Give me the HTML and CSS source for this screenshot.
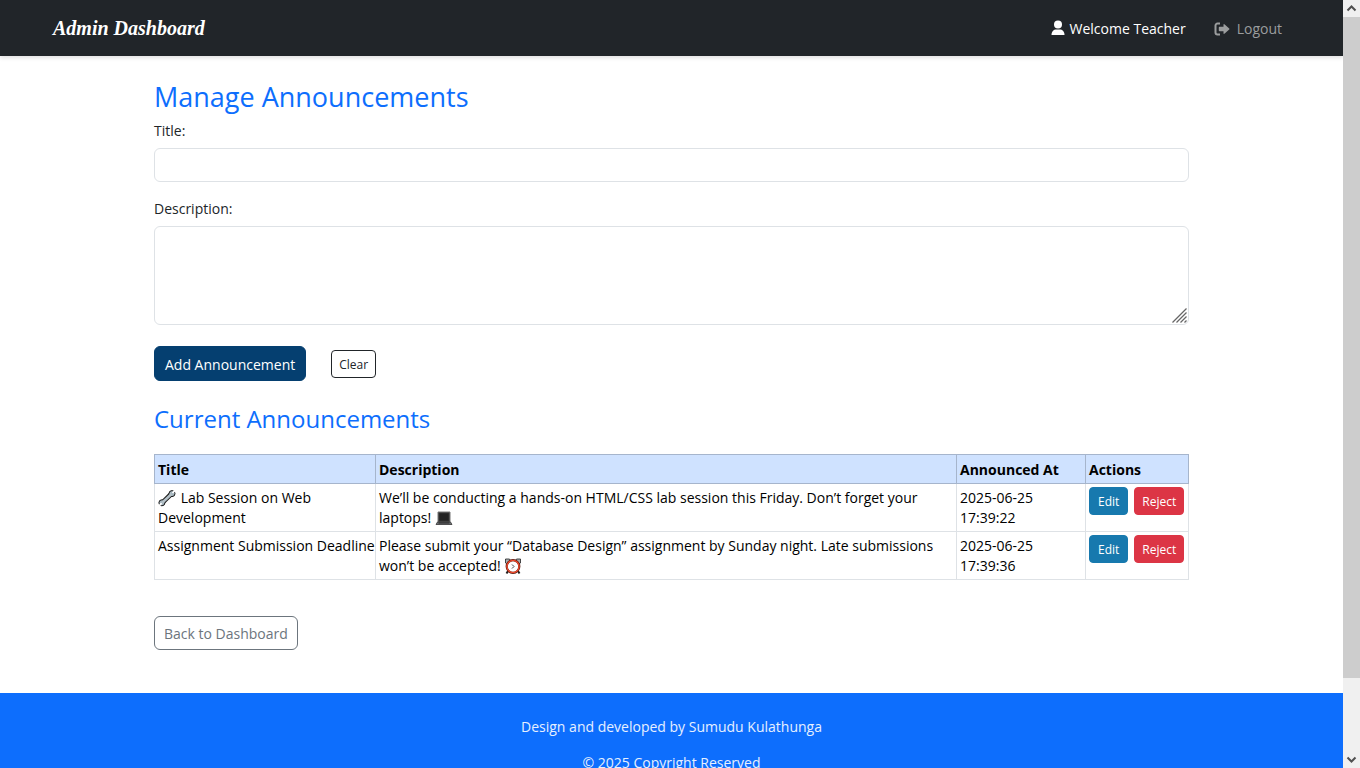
FILE: index.html
```html
<!DOCTYPE html>
<html lang="en">
<head>
<meta charset="utf-8">
<meta name="viewport" content="width=device-width, initial-scale=1">
<title>Admin Dashboard</title>
<link rel="stylesheet" href="styles.css">
</head>
<body>
<div class="page">
  <header class="navbar">
    <a class="brand" href="#">Admin Dashboard</a>
    <nav class="nav-links">
      <span class="welcome">
        <svg class="icon-user" viewBox="0 0 14 16" aria-hidden="true"><circle cx="7" cy="4.500" r="4"/><path d="M.5 15c0-3.500 2-5.500 5-5.500h3c3 0 5 2 5 5.500z"/></svg>
        Welcome Teacher
      </span>
      <a class="logout" href="#">
        <svg class="icon-logout" viewBox="0 0 16 14" aria-hidden="true"><path d="M6 1.500H3.500a2 2 0 0 0-2 2v7a2 2 0 0 0 2 2H6" fill="none" stroke="currentColor" stroke-width="2"/><path d="M5.500 4.800h4V3q0-1.600 1.200-.5l4.500 4q.6.500 0 1l-4.500 4q-1.200 1-1.200-.5V9.200h-4q-.7 0-.7-.7v-3q0-.7.700-.7z"/></svg>
        Logout
      </a>
    </nav>
  </header>

  <main class="content">
    <h1 class="title">Manage Announcements</h1>
    <form class="form">
      <label class="label" for="title">Title:</label>
      <input class="field" id="title" type="text">
      <label class="label" for="description">Description:</label>
      <div class="area-wrap">
        <textarea class="field area" id="description"></textarea>
        <svg class="grip" viewBox="0 0 15 15" aria-hidden="true"><path d="M.5 14.500 14.500.5M4.500 14.500l10-10M8.500 14.500l6-6M12.500 14.500l2-2"/></svg>
      </div>
      <div class="form-actions">
        <button class="btn btn-add" type="submit">Add Announcement</button>
        <button class="btn btn-small btn-clear" type="reset">Clear</button>
      </div>
    </form>

    <h2 class="subtitle">Current Announcements</h2>
    <table class="table">
      <colgroup><col class="col-title"><col class="col-desc"><col class="col-date"><col class="col-actions"></colgroup>
      <thead>
        <tr><th scope="col">Title</th><th scope="col">Description</th><th scope="col">Announced At</th><th scope="col">Actions</th></tr>
      </thead>
      <tbody>
        <tr>
          <td><svg class="emoji emoji-wrench" viewBox="0 0 18 18" role="img" aria-label="wrench"><path d="M4.200 13.800 13.200 5" stroke="#1b1b1b" stroke-width="4.600"/><circle cx="3.900" cy="13.800" r="3" fill="#a3b4bd" stroke="#1b1b1b"/><circle cx="14" cy="4.600" r="3" fill="#a3b4bd" stroke="#1b1b1b"/><path d="M4.200 13.800 13.500 5" stroke="#b4c1c8" stroke-width="2.600"/><path d="m1 17 2.600-2.800M14.500 4 17 1.300" stroke="#fff" stroke-width="1.800"/></svg> Lab Session on Web<br>Development</td>
          <td>We’ll be conducting a hands-on HTML/CSS lab session this Friday. Don’t forget your laptops! <svg class="emoji" viewBox="0 0 18 18" role="img" aria-label="laptop"><path d="M3 3h12v10H3z" fill="#333" stroke="#777" stroke-width="1"/><path d="M4.500 4.500h9v7h-9z" fill="#222"/><path d="M2.500 13h13l1.500 2.500H1z" fill="#75777a" stroke="#222" stroke-width=".7"/><path d="M3.500 14h11" stroke="#222"/></svg></td>
          <td>2025-06-25 17:39:22</td>
          <td><div class="row-actions"><button class="btn btn-small btn-edit" type="button">Edit</button><button class="btn btn-small btn-reject" type="button">Reject</button></div></td>
        </tr>
        <tr>
          <td>Assignment Submission Deadline</td>
          <td>Please submit your “Database Design” assignment by Sunday night. Late submissions won’t be accepted! <svg class="emoji" viewBox="0 0 18 18" role="img" aria-label="alarm clock"><path d="m4 14-1.500 2.500M14 14l1.500 2.500" stroke="#222" stroke-width="2"/><path d="M1.500 6V2h4l1 2-3.500 3zM16.500 6V2h-4l-1 2L15 7z" fill="#a9b1b5" stroke="#222" stroke-width=".8"/><circle cx="9" cy="9.500" r="6.300" fill="#fff" stroke="#5a1a10" stroke-width="2.200"/><circle cx="9" cy="9.500" r="6.100" fill="none" stroke="#ee4a2c" stroke-width="1.400"/><path d="m8 7.500 2 2-2 2" fill="none" stroke="#444"/></svg></td>
          <td>2025-06-25 17:39:36</td>
          <td><div class="row-actions"><button class="btn btn-small btn-edit" type="button">Edit</button><button class="btn btn-small btn-reject" type="button">Reject</button></div></td>
        </tr>
      </tbody>
    </table>
    <a class="btn btn-back" href="#">Back to Dashboard</a>
  </main>

  <footer class="footer">
    <p>Design and developed by Sumudu Kulathunga</p>
    <p>© 2025 Copyright Reserved</p>
  </footer>
</div>
<div class="scrollbar" aria-hidden="true">
  <svg class="arrow" viewBox="0 0 17 17"><path d="m4.500 10.500 4-4 4 4"/></svg>
  <div class="track"><div class="thumb"></div></div>
  <svg class="arrow" viewBox="0 0 17 17"><path d="m4.500 6.500 4 4 4-4"/></svg>
</div>
</body>
</html>
```
FILE: styles.css
```css
*, *::before, *::after { box-sizing: border-box; }
body {
  display: flex;
  height: 100vh;
  margin: 0;
  overflow: hidden;
  background: #fff;
  color: #212529;
  font-family: "Open Sans", "Noto Sans", sans-serif;
  font-size: 14px;
  line-height: 20px;
}
.page { flex: 1; min-width: 0; overflow: hidden; }
.navbar {
  display: flex;
  align-items: center;
  justify-content: space-between;
  height: 56px;
  padding: 0 61px 0 53px;
  background: #212529;
  box-shadow: 0 2px 4px rgba(0, 0, 0, .12);
}
.brand {
  color: #fff;
  font: italic bold 20px/28px "Liberation Serif", serif;
  text-decoration: none;
}
.nav-links { display: flex; gap: 28px; padding-top: 2px; }
.welcome, .logout { display: flex; align-items: center; gap: 7px; color: #fff; }
.welcome { gap: 5px; }
.logout { color: #9b9d9e; text-decoration: none; }
.icon-user { width: 14px; height: 16px; margin-bottom: 2px; fill: currentColor; }
.icon-logout { width: 16px; height: 14px; fill: currentColor; }

.content { max-width: 1035px; margin: 0 auto; padding: 24px 0 43px; }
.title, .subtitle { margin: 0; color: #0d6efd; font-weight: 400; }
.title { font-size: 27px; line-height: 34px; }
.subtitle { margin: 21px 0 18px; font-size: 24px; line-height: 34px; }
.form { display: flex; flex-direction: column; }
.label { margin: 7px 0; }
.field {
  display: block;
  width: 100%;
  height: 34px;
  padding: 6px 12px;
  border: 1px solid #dee2e6;
  border-radius: 6px;
  background: #fff;
  color: inherit;
  font: inherit;
}
.field + .label { margin-top: 17px; }
.area-wrap { position: relative; }
.area { height: 99px; resize: none; }
.grip { position: absolute; right: 2px; bottom: 2px; width: 15px; height: 15px; stroke: #666; stroke-width: 1.3; fill: none; pointer-events: none; }
.form-actions { display: flex; align-items: center; gap: 25px; margin-top: 21px; }
.btn {
  display: inline-block;
  padding: 8px 10px 5px;
  border: 1px solid;
  border-radius: 6px;
  font: inherit;
  text-decoration: none;
  white-space: nowrap;
}
.btn-add { border-color: #053f70; background: #053f70; color: #fff; }
.btn-small { padding: 5px 7px 3px; border-radius: 4px; font-size: 12px; line-height: 18px; }
.btn-clear { border-color: #212529; background: #fff; color: #212529; }
.btn-edit { padding: 5px 8px 3px; border-color: #1779ae; background: #1779ae; color: #fff; }
.btn-reject { border-color: #dc3545; background: #dc3545; color: #fff; }
.btn-back { margin-top: 36px; padding: 7px 9px 5px; border-color: #6c757d; color: #6c757d; }

.table { width: 100%; border-collapse: collapse; table-layout: fixed; color: #000; }
.col-title { width: 221px; }
.col-date { width: 129px; }
.col-actions { width: 103px; }
.table th, .table td { padding: 4px 0 3px 3px; border: 1px solid #dee2e6; text-align: left; vertical-align: top; }
.table td:first-child { white-space: nowrap; }
.table td:last-child { padding: 3px; }
.table th { padding: 5px 3px 3px; border-color: #a6b5cc; background: #cfe2ff; font-weight: 700; }
.row-actions { display: flex; gap: 6px; }
.emoji { width: 18px; height: 18px; vertical-align: -4px; }
.emoji-wrench { margin-right: 1px; }

.footer { padding: 24px 0; background: #0d6efd; color: #e6f0ff; text-align: center; }
.footer p { margin: 0 0 16px; }

.scrollbar { display: flex; flex: 0 0 17px; flex-direction: column; background: #f0f0f0; }
.arrow { width: 17px; height: 17px; fill: none; stroke: #505050; stroke-width: 2; }
.track { flex: 1; }
.thumb { height: 90%; background: #cdcdcd; }
```
